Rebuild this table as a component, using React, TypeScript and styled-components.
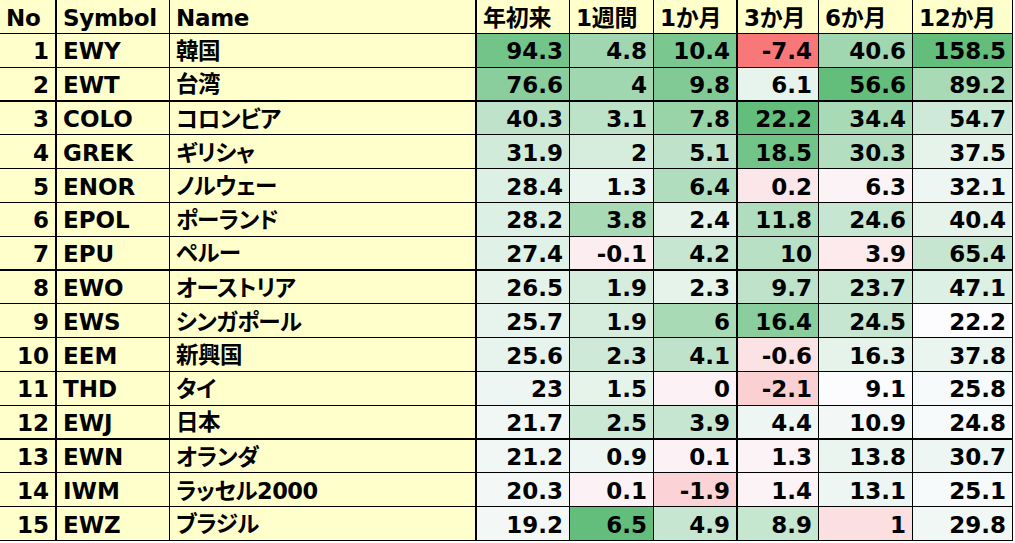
import { FC } from "react"
import styled, { createGlobalStyle } from "styled-components"

const GlobalStyle = createGlobalStyle`
  html, body {
    margin: 0;
    padding: 0;
    background: #ffffff;
  }
  body {
    font-family: "DejaVu Sans", "Noto Sans CJK JP", sans-serif;
  }
`

// column widths taken from the sheet, border included
const COLS = [57, 113, 307, 93, 84, 84, 81, 94, 100]
const THICK_AFTER_COL = [0, 2, 5]
const THICK_AFTER_ROW = [2, 7, 12]

const Sheet = styled.div`
  display: grid;
  grid-template-columns: ${COLS.map((c) => `${c}px`).join(" ")};
  grid-template-rows: 34px repeat(15, 33.8px);
  width: ${COLS.reduce((a, b) => a + b, 0)}px;
  font-weight: bold;
  font-size: 23px;
  color: #000;
`

const Cell = styled.div<{
  $right?: boolean
  $head?: boolean
  $bg?: string
  $thickR?: boolean
  $thickB?: boolean
}>`
  box-sizing: border-box;
  display: flex;
  align-items: center;
  justify-content: ${({ $right }) => ($right ? "flex-end" : "flex-start")};
  padding: ${({ $head }) => ($head ? "4px" : "3px")}
    ${({ $right }) => ($right ? "6px" : "0")} 0
    ${({ $right }) => ($right ? "0" : "6px")};
  background: ${({ $bg }) => $bg ?? "#ffffcc"};
  border-right: ${({ $thickR }) => ($thickR ? "2px" : "1px")} solid #000;
  border-bottom: ${({ $thickB }) => ($thickB ? "2px" : "1px")} solid #000;
  letter-spacing: ${({ $head }) => ($head ? "-0.3px" : "0")};
  white-space: nowrap;
  overflow: hidden;
  line-height: 1;
`

// Japanese names: latin digits stay in DejaVu, kana fall back to Noto CJK
const Kana = styled.span`
  display: block;
  font-family: "DejaVu Sans", "Noto Sans CJK JP", sans-serif;
  font-size: 22.5px;
  font-feature-settings: "palt";
  letter-spacing: -0.5px;
  line-height: 1;
  margin-top: -1px;
`

const HEAD = ["No", "Symbol", "Name", "年初来", "1週間", "1か月", "3か月", "6か月", "12か月"]

type Row = [string, string, string, [string, number][]]

// [value, tint]: tint > 0 blends to green, tint < 0 blends to red
const ROWS: Row[] = [
  ["1", "EWY", "韓国", [["94.3", 0.9], ["4.8", 0.6], ["10.4", 0.85], ["-7.4", -0.9], ["40.6", 0.6], ["158.5", 1]]],
  ["2", "EWT", "台湾", [["76.6", 0.75], ["4", 0.6], ["9.8", 0.8], ["6.1", 0.14], ["56.6", 1], ["89.2", 0.55]]],
  ["3", "COLO", "コロンビア", [["40.3", 0.4], ["3.1", 0.42], ["7.8", 0.65], ["22.2", 1], ["34.4", 0.55], ["54.7", 0.3]]],
  ["4", "GREK", "ギリシャ", [["31.9", 0.28], ["2", 0.25], ["5.1", 0.4], ["18.5", 0.9], ["30.3", 0.48], ["37.5", 0.15]]],
  ["5", "ENOR", "ノルウェー", [["28.4", 0.2], ["1.3", 0.12], ["6.4", 0.5], ["0.2", -0.15], ["6.3", -0.06], ["32.1", 0.1]]],
  ["6", "EPOL", "ポーランド", [["28.2", 0.2], ["3.8", 0.55], ["2.4", 0.15], ["11.8", 0.5], ["24.6", 0.35], ["40.4", 0.15]]],
  ["7", "EPU", "ペルー", [["27.4", 0.18], ["-0.1", -0.1], ["4.2", 0.35], ["10", 0.45], ["3.9", -0.12], ["65.4", 0.35]]],
  ["8", "EWO", "オーストリア", [["26.5", 0.15], ["1.9", 0.25], ["2.3", 0.15], ["9.7", 0.4], ["23.7", 0.33], ["47.1", 0.2]]],
  ["9", "EWS", "シンガポール", [["25.7", 0.14], ["1.9", 0.25], ["6", 0.55], ["16.4", 0.75], ["24.5", 0.35], ["22.2", 0]]],
  ["10", "EEM", "新興国", [["25.6", 0.14], ["2.3", 0.3], ["4.1", 0.4], ["-0.6", -0.18], ["16.3", 0.15], ["37.8", 0.12]]],
  ["11", "THD", "タイ", [["23", 0.1], ["1.5", 0.15], ["0", -0.07], ["-2.1", -0.3], ["9.1", 0], ["25.8", 0.04]]],
  ["12", "EWJ", "日本", [["21.7", 0.08], ["2.5", 0.32], ["3.9", 0.35], ["4.4", 0.1], ["10.9", 0.06], ["24.8", 0.03]]],
  ["13", "EWN", "オランダ", [["21.2", 0.08], ["0.9", 0.1], ["0.1", -0.07], ["1.3", -0.06], ["13.8", 0.12], ["30.7", 0.1]]],
  ["14", "IWM", "ラッセル2000", [["20.3", 0.06], ["0.1", -0.07], ["-1.9", -0.28], ["1.4", -0.06], ["13.1", 0.1], ["25.1", 0.04]]],
  ["15", "EWZ", "ブラジル", [["19.2", 0.06], ["6.5", 1], ["4.9", 0.35], ["8.9", 0.36], ["1", -0.2], ["29.8", 0.08]]],
]

const WHITE = [252, 252, 255]
const GREEN = [99, 190, 123]
const RED = [248, 105, 107]

const tint = (t: number) => {
  const to = t >= 0 ? GREEN : RED
  const k = Math.min(1, Math.abs(t))
  const c = WHITE.map((w, i) => Math.round(w + (to[i] - w) * k))
  return `rgb(${c[0]}, ${c[1]}, ${c[2]})`
}

const App: FC = () => {
  return (
    <>
      <GlobalStyle />
      <Sheet>
        {HEAD.map((h, c) => (
          <Cell key={h} $head $thickR={THICK_AFTER_COL.includes(c)}>
            {h}
          </Cell>
        ))}
        {ROWS.map(([no, sym, name, vals], r) => {
          const thickB = THICK_AFTER_ROW.includes(r + 1)
          return [
            <Cell key={`${no}-no`} $right $thickR $thickB={thickB}>
              {no}
            </Cell>,
            <Cell key={`${no}-sym`} $thickB={thickB}>
              {sym}
            </Cell>,
            <Cell key={`${no}-name`} $thickR $thickB={thickB}>
              <Kana>{name}</Kana>
            </Cell>,
            ...vals.map(([v, t], i) => (
              <Cell
                key={`${no}-${i}`}
                $right
                $bg={tint(t)}
                $thickR={THICK_AFTER_COL.includes(i + 3)}
                $thickB={thickB}
              >
                {v}
              </Cell>
            )),
          ]
        })}
      </Sheet>
    </>
  )
}

export default App
